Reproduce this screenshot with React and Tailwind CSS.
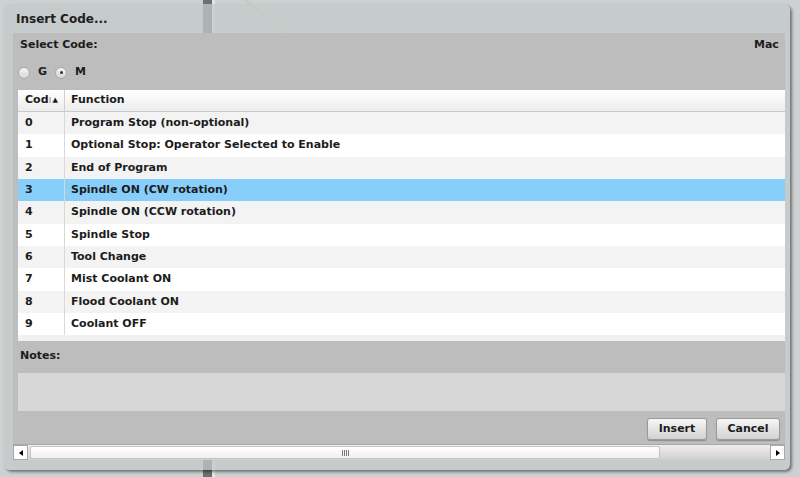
import { useState } from 'react';

const codes = [
  ['0', 'Program Stop (non-optional)'],
  ['1', 'Optional Stop: Operator Selected to Enable'],
  ['2', 'End of Program'],
  ['3', 'Spindle ON (CW rotation)'],
  ['4', 'Spindle ON (CCW rotation)'],
  ['5', 'Spindle Stop'],
  ['6', 'Tool Change'],
  ['7', 'Mist Coolant ON'],
  ['8', 'Flood Coolant ON'],
  ['9', 'Coolant OFF'],
];

function Radio({ checked, label, onClick }) {
  return (
    <button type="button" onClick={onClick} className="flex items-center gap-[8px]">
      <span className="w-[12px] h-[12px] rounded-full border border-[#a9a9a9] bg-gradient-to-b from-[#f4f4f4] to-[#d6d6d6] flex items-center justify-center">
        {checked && <span className="w-[3px] h-[3px] rounded-full bg-[#333]" />}
      </span>
      <span>{label}</span>
    </button>
  );
}

export default function App() {
  const [mode, setMode] = useState('M');
  const [selected, setSelected] = useState(3);

  return (
    <div className="relative w-[800px] h-[477px] overflow-hidden bg-[#cdd1d1] font-['DejaVu_Sans',sans-serif] text-[11px] font-bold text-[#1c1c1c]">
      {/* desktop behind the dialog */}
      <div className="absolute left-[203px] top-0 bottom-0 w-[9px] bg-[#6e7070]" />
      <div className="absolute left-[212px] top-0 bottom-0 w-[3px] bg-[#e4e6e6]" />
      <svg className="absolute left-0 top-0" width="800" height="477" aria-hidden="true">
        <line x1="245" y1="0" x2="295" y2="40" stroke="#9fd39a" strokeWidth="1" />
      </svg>

      {/* dialog window */}
      <div className="absolute left-[4px] top-[4px] w-[786px] h-[466px] rounded-[6px] bg-[rgba(195,200,200,0.75)] shadow-[2px_2px_3px_rgba(0,0,0,0.45)] flex flex-col">
        <div className="h-[29px] pl-[12px] flex items-center text-[12px] text-[#202020]">Insert Code...</div>

        <div className="ml-[9px] mr-[5px] flex-1 bg-[#bdbdbd] flex flex-col overflow-hidden">
          <div className="flex-1 overflow-hidden">
            <div className="w-[900px]">
              <div className="h-[24px] flex items-center pl-[7px]">
                <span className="w-[734px]">Select Code:</span>
                <span>Mac</span>
              </div>
              <div className="h-[31px] flex items-center gap-[8px] pl-[5px]">
                <Radio label="G" checked={mode === 'G'} onClick={() => setMode('G')} />
                <Radio label="M" checked={mode === 'M'} onClick={() => setMode('M')} />
              </div>

              {/* code table */}
              <div className="mt-[2px] ml-[5px] w-[880px] bg-[#f1f1f1] pb-[6px]">
                <div className="h-[22px] flex items-center bg-gradient-to-b from-[#ffffff] to-[#ececec] border-b border-[#c9c9c9]">
                  <div className="w-[47px] h-full flex items-center pl-[7px] border-r border-[#d0d0d0] relative overflow-hidden">
                    <span>Cod</span>
                    <span className="text-[#999] font-normal">ı</span>
                    <span className="text-[7px] ml-[1px]">▲</span>
                  </div>
                  <div className="pl-[6px]">Function</div>
                </div>
                {codes.map(([code, fn], i) => (
                  <div
                    key={code}
                    onClick={() => setSelected(i)}
                    className={`h-[22.33px] flex items-center cursor-default ${
                      i === selected ? 'bg-[#87cefa]' : i % 2 === 0 ? 'bg-[#f3f3f3]' : 'bg-white'
                    }`}
                  >
                    <div className="w-[47px] h-full flex items-center pl-[7px] border-r border-[#d8d8d8]">{code}</div>
                    <div className="pl-[6px]">{fn}</div>
                  </div>
                ))}
              </div>

              <div className="h-[30px] flex items-center pl-[7px]">Notes:</div>
              <div className="mt-[2px] ml-[5px] w-[880px] h-[38px] bg-[#d7d7d7]" />
            </div>
          </div>

          <div className="h-[33px] flex items-start justify-end gap-[9px] pr-[5px] pt-[7px]">
            <button type="button" className="w-[60px] h-[22px] rounded-[3px] border border-[#9a9a9a] bg-gradient-to-b from-[#f6f6f6] to-[#d2d2d2] shadow-[0_1px_1px_rgba(0,0,0,0.25)]">
              Insert
            </button>
            <button type="button" className="w-[64px] h-[22px] rounded-[3px] border border-[#9a9a9a] bg-gradient-to-b from-[#f6f6f6] to-[#d2d2d2] shadow-[0_1px_1px_rgba(0,0,0,0.25)]">
              Cancel
            </button>
          </div>

          {/* horizontal scrollbar */}
          <div className="h-[16px] flex items-stretch bg-gradient-to-b from-[#eeeeee] to-[#cfcfcf] border-t border-[#a8a8a8]">
            <div className="w-[15px] bg-white border border-[#a8a8a8] flex items-center justify-center">
              <span className="w-0 h-0 border-y-[3px] border-y-transparent border-r-[4px] border-r-black" />
            </div>
            <div className="flex-1 flex pl-[2px] pr-[1px] py-[1px]">
              <div className="w-[630px] rounded-[2px] bg-gradient-to-b from-[#ffffff] to-[#efefef] border border-[#c4c4c4] flex items-center justify-center">
                <span className="flex gap-[1px]">
                  <span className="w-[1px] h-[6px] bg-[#777]" />
                  <span className="w-[1px] h-[6px] bg-[#777]" />
                  <span className="w-[1px] h-[6px] bg-[#777]" />
                  <span className="w-[1px] h-[6px] bg-[#777]" />
                </span>
              </div>
            </div>
            <div className="w-[15px] bg-white border border-[#a8a8a8] flex items-center justify-center">
              <span className="w-0 h-0 border-y-[3px] border-y-transparent border-l-[4px] border-l-black" />
            </div>
          </div>
        </div>
        <div className="h-[10px]" />
      </div>
    </div>
  );
}
